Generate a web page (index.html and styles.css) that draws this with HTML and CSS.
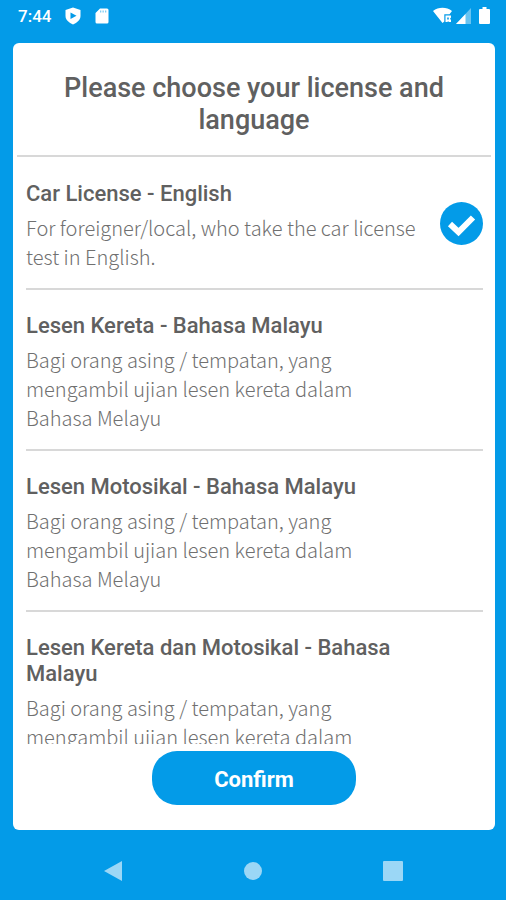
FILE: index.html
```html
<!DOCTYPE html>
<html lang="en">
<head>
<meta charset="utf-8">
<meta name="viewport" content="width=device-width, initial-scale=1">
<title>Choose license and language</title>
<link rel="stylesheet" href="styles.css">
</head>
<body>
<header class="status">
  <div class="status-group status-left">
    <time class="clock">7:44</time>
    <svg width="16" height="18" viewBox="0 0 16 18" aria-hidden="true"><path fill="#fff" d="M8 0.500 15.500 3v6c0 4-3.500 6.500-7.500 8.500-4-2-7.500-4.500-7.500-8.500V3z"/><path fill="#039be8" d="M5.500 5.500v6.500l6-3.200z"/></svg>
    <svg width="14" height="16" viewBox="0 0 14 16" aria-hidden="true"><path fill="#fff" d="M5 0.500h7a1.500 1.500 0 0 1 1.500 1.500v12a1.500 1.500 0 0 1-1.500 1.500H2A1.500 1.500 0 0 1 .5 14V5z"/><path fill="#039be8" fill-opacity=".5" d="M5 2.500h1.300v2H5zM7.500 2.500h1.300v2H7.500zM10 2.500h1.300v2H10z"/></svg>
  </div>
  <div class="status-group status-right">
    <svg width="19" height="17" viewBox="0 0 19 17" aria-hidden="true"><path fill="#fff" d="M0 4C5.500-.3 13.500-.3 19 4L16.500 7.300H11.300v7.200L9.500 16z"/><path fill="#fff" d="M12.500 8.500H18v2l-1 1.300 1 1.200v2h-2.200l-.7-1-.7 1h-1.900zM14.200 10.500v2h1.600v-2z" fill-rule="evenodd"/></svg>
    <svg width="15" height="16" viewBox="0 0 15 16" aria-hidden="true"><path fill="#fff" fill-opacity=".4" d="M15 0v16H0z"/><path fill="#fff" d="M9.500 6v10H0z"/></svg>
    <svg width="11" height="17" viewBox="0 0 11 17" aria-hidden="true"><path fill="#fff" d="M3.500 0h4v2H10a1 1 0 0 1 1 1v13a1 1 0 0 1-1 1H1a1 1 0 0 1-1-1V3a1 1 0 0 1 1-1h2.500z"/></svg>
  </div>
</header>

<main class="card">
  <h1 class="heading" id="heading">Please choose your license and language</h1>
  <div class="options" role="radiogroup" aria-labelledby="heading">
    <label class="option">
      <span class="option-text">
        <span class="option-title">Car License - English</span>
        <span class="option-note">For foreigner/local, who take the car license test in English.</span>
      </span>
      <input class="option-radio" type="radio" name="license" checked>
      <svg class="option-check" viewBox="0 0 43 43" aria-hidden="true"><circle cx="21.500" cy="21.500" r="21.500" fill="#039be8"/><path d="M10 22 18.500 30 33 15.500" fill="none" stroke="#fff" stroke-width="6"/></svg>
    </label>
    <label class="option">
      <span class="option-text">
        <span class="option-title">Lesen Kereta - Bahasa Malayu</span>
        <span class="option-note">Bagi orang asing / tempatan, yang mengambil ujian lesen kereta dalam <br>Bahasa Melayu</span>
      </span>
      <input class="option-radio" type="radio" name="license">
      <svg class="option-check" viewBox="0 0 43 43" aria-hidden="true"><circle cx="21.500" cy="21.500" r="21.500" fill="#039be8"/><path d="M10 22 18.500 30 33 15.500" fill="none" stroke="#fff" stroke-width="6"/></svg>
    </label>
    <label class="option">
      <span class="option-text">
        <span class="option-title">Lesen Motosikal - Bahasa Malayu</span>
        <span class="option-note">Bagi orang asing / tempatan, yang mengambil ujian lesen kereta dalam <br>Bahasa Melayu</span>
      </span>
      <input class="option-radio" type="radio" name="license">
      <svg class="option-check" viewBox="0 0 43 43" aria-hidden="true"><circle cx="21.500" cy="21.500" r="21.500" fill="#039be8"/><path d="M10 22 18.500 30 33 15.500" fill="none" stroke="#fff" stroke-width="6"/></svg>
    </label>
    <label class="option">
      <span class="option-text">
        <span class="option-title">Lesen Kereta dan Motosikal - Bahasa Malayu</span>
        <span class="option-note">Bagi orang asing / tempatan, yang mengambil ujian lesen kereta dalam</span>
      </span>
      <input class="option-radio" type="radio" name="license">
      <svg class="option-check" viewBox="0 0 43 43" aria-hidden="true"><circle cx="21.500" cy="21.500" r="21.500" fill="#039be8"/><path d="M10 22 18.500 30 33 15.500" fill="none" stroke="#fff" stroke-width="6"/></svg>
    </label>
  </div>
  <button class="confirm" type="button">Confirm</button>
</main>

<nav class="navbar" aria-label="System">
  <button class="nav-button" type="button" aria-label="Back"><svg width="20" height="22" viewBox="0 0 20 22"><path fill="#9bd7f6" d="M19 1v20L1 11z"/></svg></button>
  <button class="nav-button" type="button" aria-label="Home"><svg width="20" height="20" viewBox="0 0 20 20"><circle cx="10" cy="10" r="9" fill="#9bd7f6"/></svg></button>
  <button class="nav-button" type="button" aria-label="Recent apps"><svg width="20" height="20" viewBox="0 0 20 20"><rect width="20" height="20" rx="1" fill="#9bd7f6"/></svg></button>
</nav>
</body>
</html>
```
FILE: styles.css
```css
* {
  box-sizing: border-box;
}

body {
  margin: 0;
  height: 100vh;
  display: flex;
  flex-direction: column;
  background: #039be8;
  font-family: Roboto, "Liberation Sans", sans-serif;
  color: #606060;
}

.status {
  flex: none;
  display: flex;
  justify-content: space-between;
  padding: 0 16px 12px 18px;
  height: 43px;
}

.status-group {
  display: flex;
  align-items: center;
}

.status-left {
  gap: 14px;
}

.status-right {
  gap: 4px;
}

.status-right svg:last-child {
  margin-left: 4px;
}

.clock {
  color: #fff;
  font-size: 17px;
  font-weight: 500;
}

.card {
  flex: 1;
  min-height: 0;
  display: flex;
  flex-direction: column;
  margin: 0 11px 0 13px;
  padding: 0 4px 25px;
  border-radius: 6px;
  background: #fff;
}

.heading {
  margin: 0;
  padding: 29px 24px 19px;
  border-bottom: 2px solid #d8d8d8;
  font-size: 27px;
  line-height: 32px;
  font-weight: 500;
  text-align: center;
}

.options {
  flex: 1;
  min-height: 0;
  margin-bottom: 7px;
  padding: 1px 8px 0 9px;
  overflow-y: auto;
  scrollbar-width: none;
}

.option {
  display: flex;
  align-items: center;
  gap: 16px;
  border-bottom: 2px solid #d8d8d8;
}

.option-text {
  flex: 1;
  display: flex;
  flex-direction: column;
  gap: 6px;
  padding: 23px 0 17px;
}

.option-title {
  font-size: 22px;
  line-height: 26px;
  font-weight: 500;
}

.option-note {
  color: #707070;
  font-family: "Noto Sans CJK SC", "Noto Sans", sans-serif;
  font-size: 20px;
  line-height: 29px;
  font-weight: 300;
}

.option-radio {
  position: absolute;
  opacity: 0;
}

.option-check {
  flex: none;
  width: 43px;
  height: 43px;
  visibility: hidden;
}

.option-radio:checked + .option-check {
  visibility: visible;
}

.confirm {
  flex: none;
  align-self: center;
  width: 204px;
  height: 54px;
  padding: 2px 0 0;
  border: 0;
  border-radius: 25px;
  background: #039be8;
  color: #fff;
  font-family: inherit;
  font-size: 22px;
  font-weight: 700;
}

.navbar {
  flex: none;
  display: flex;
  justify-content: space-between;
  padding: 12px 83px 0;
  height: 70px;
}

.nav-button {
  display: grid;
  place-items: center;
  width: 60px;
  height: 58px;
  padding: 0;
  border: 0;
  background: none;
}
```
